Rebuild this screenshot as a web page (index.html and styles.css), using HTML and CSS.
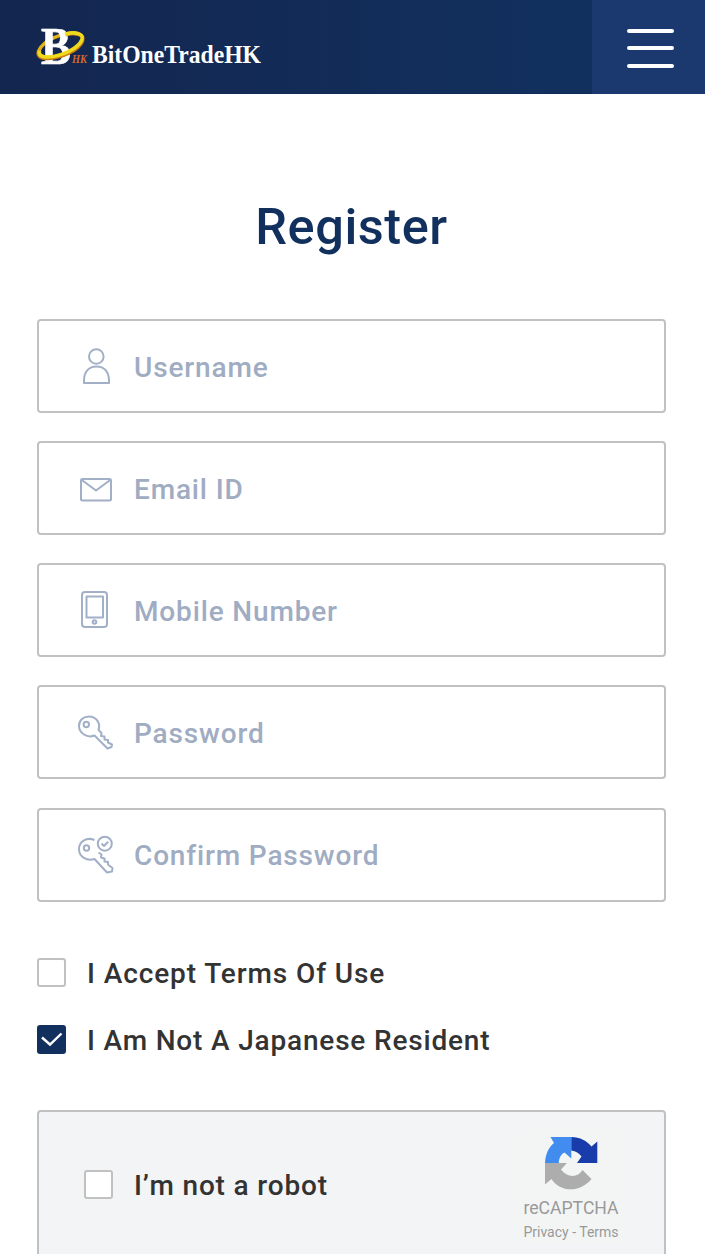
FILE: index.html
```
<!DOCTYPE html>
<html lang="en">
<head>
<meta charset="utf-8">
<title>Register</title>
<link rel="stylesheet" href="styles.css">
</head>
<body>
<header class="bar">
  <a class="brand" aria-label="BitOneTradeHK">
    <svg width="260" height="90" viewBox="20 0 260 90">
      <path d="M80 35C71 30 49 37 41 47C36 54 41 58 52 57" fill="none" stroke="#e0b31a" stroke-width="3.600"/>
      <text class="logo-b" x="41" y="63.500" textLength="30" lengthAdjust="spacingAndGlyphs">B</text>
      <path d="M66 34.800C77 31.500 84.500 34.500 82.500 41C79 50 62 58 48 58.500C40 58.500 36.500 55.500 39 50" fill="none" stroke="#c97b16" stroke-width="3.600"/>
      <path d="M65 34.200C76 31 84 34 82 39.500C78.500 48.500 62 56.500 48 57C41 57 38 55 39.500 50.500" fill="none" stroke="#f0da1c" stroke-width="3.600"/>
      <text class="logo-hk" x="72" y="63" textLength="15" lengthAdjust="spacingAndGlyphs">HK</text>
      <text class="logo-name" x="92" y="62.500" textLength="169" lengthAdjust="spacingAndGlyphs">BitOneTradeHK</text>
    </svg>
  </a>
  <button class="menu" aria-label="Menu"><span class="line"></span><span class="line"></span><span class="line"></span></button>
</header>
<main class="page">
  <h1 class="title">Register</h1>
  <form class="fields">
    <div class="field">
      <svg class="icon" width="40" height="44" viewBox="76 344 40 44"><circle cx="96.300" cy="356.500" r="7.300"/><path d="M84 383V380.500C84 371.500 89 366.500 96.500 366.500S109 371.500 109 380.500V383Z"/></svg>
      <span class="label user">Username</span>
    </div>
    <div class="field">
      <svg class="icon" width="40" height="44" viewBox="76 466 40 44"><rect x="81" y="479" width="30" height="21.500" rx="1.500"/><path d="M81.500 479.800L96 490.500L110.500 479.800"/></svg>
      <span class="label email">Email ID</span>
    </div>
    <div class="field">
      <svg class="icon" width="40" height="44" viewBox="76 588 40 44"><rect x="82" y="592" width="25" height="35" rx="3"/><rect x="86.500" y="596.500" width="16.500" height="21"/><circle cx="94.500" cy="622" r="1.800"/></svg>
      <span class="label mobile">Mobile Number</span>
    </div>
    <div class="field">
      <svg class="icon" width="40" height="44" viewBox="76 710 40 44"><circle cx="86.300" cy="724.500" r="2.700"/><path d="M94.500 735.500C87 738.500 79 733 79 726C79 720 83.500 716.500 89 716.500C96 716.500 101 723 98.500 730L101.500 733L101 736L104.500 736.500L104.500 739.500L108 740L108 742.500L112 744.500L111.500 747L107.500 748.500Z"/></svg>
      <span class="label pass">Password</span>
    </div>
    <div class="field">
      <svg class="icon" width="40" height="44" viewBox="76 833 40 44"><circle cx="86.500" cy="848" r="2.700"/><path d="M94.500 840.200C87 836.500 79 841.500 79 849C79 857 87 861.500 94.500 859L107 872.500L112 871.500L112.500 868L108 864.500V862L104.500 861.500V858.500L101 857.500L101.500 854.500L98.500 852.500"/><circle cx="104.800" cy="843.700" r="7"/><path d="M101.500 843.500L104 846L108.200 841.800"/></svg>
      <span class="label confirm">Confirm Password</span>
    </div>
  </form>
  <div class="choices">
    <div class="choice"><span class="box"></span><span class="text terms">I Accept Terms Of Use</span></div>
    <div class="choice"><span class="box checked"><svg width="29" height="29" viewBox="0 0 29 29"><path d="M5 12.500L13 19.500L24.500 8.500" fill="none" stroke="#fff" stroke-width="2.400"/></svg></span><span class="text resident">I Am Not A Japanese Resident</span></div>
  </div>
  <section class="captcha">
    <span class="box"></span><span class="text robot">I’m not a robot</span>
    <div class="badge">
      <svg class="arrows" width="56" height="56" viewBox="543 1135 56 56">
        <path d="M545 1163C545.500 1154 548.500 1147.500 554 1143L550.500 1137H571.300V1158.500L564.500 1152.500C561 1154 559 1158 558.800 1163Z" fill="#438cef"/>
        <path d="M571.300 1137C580 1137 587 1141 591.500 1146.500L597.300 1141.500V1163H577L581.500 1156.500C579 1153 576 1151 571.300 1150.500Z" fill="#193cab"/>
        <path d="M545 1163H567L561 1169.500C567 1178 578 1178 582.500 1170L591.500 1179C580 1193 560 1192.500 551.500 1179L545 1184.500Z" fill="#adadad"/>
      </svg>
      <span class="rc">reCAPTCHA</span>
      <span class="links">Privacy - Terms</span>
    </div>
  </section>
</main>
</body>
</html>
```
FILE: styles.css
```
* { box-sizing: border-box; }
html, body { height: 1254px; overflow: hidden; }
body { margin: 0; background: #fff; font-family: Roboto, sans-serif; }
.bar { height: 94px; display: flex; justify-content: space-between; background: linear-gradient(90deg, #13264f, #12305e 80%); border-bottom: 1px solid #102a58; }
.brand { padding-left: 20px; }
.brand svg { display: block; overflow: visible; }
.logo-b { font: bold 52px "Liberation Serif", serif; fill: #fff; stroke: #fff; stroke-width: .6px; }
.logo-hk { font: italic bold 12px "Liberation Serif", serif; fill: #d4682c; }
.logo-name { font: bold 25px "Liberation Serif", serif; fill: #fff; }
.menu { width: 113px; height: 94px; padding: 29px 31px 26px 35px; border: 0; background: #1b386f; display: flex; flex-direction: column; justify-content: space-between; }
.line { display: block; width: 47px; height: 4px; border-radius: 2px; background: #fff; }
.line:nth-child(2) { margin-top: -1px; }
.page { padding: 103px 39px 0 37px; }
.title { margin: 0; height: 60px; text-align: center; font-size: 50.500px; line-height: 60px; font-weight: 500; letter-spacing: .55px; color: #12305e; }
.fields { margin-top: 62px; display: grid; gap: 28.150px; }
.field { height: 94px; border: 2px solid #c1c1c1; border-radius: 4px; display: flex; align-items: center; padding-left: 37px; }
.icon { display: block; fill: none; stroke: #a2b0c7; stroke-width: 2; stroke-linejoin: round; }
.label, .text { white-space: nowrap; font-size: 28px; line-height: 34px; font-weight: 500; letter-spacing: .85px; }
.label { margin-left: 18px; padding-top: 3px; color: #a0acc2; }
.user, .email, .mobile { padding-top: 4px; }
.confirm { padding-top: 2px; }
.choices { margin-top: 54.400px; display: grid; gap: 33px; }
.choice { height: 34px; display: flex; align-items: center; gap: 21px; }
.text { color: #333; }
.choice .text { padding-top: 3px; }
.terms { letter-spacing: .9px; }
.resident { letter-spacing: .82px; }
.box { width: 29px; height: 29px; flex: none; border: 2px solid #c1c1c1; border-radius: 3px; background: #fff; }
.checked { border: 0; background: #12305e; }
.checked svg { display: block; }
.captcha { margin-top: 53px; height: 180px; border: 2px solid #bfc2c1; border-radius: 4px; background: #f3f4f6; display: flex; align-items: flex-start; padding-left: 45px; }
.captcha .box { margin-top: 58.500px; }
.robot { margin: 57px 0 0 21px; }
.badge { width: 110px; margin: 18px 38px 0 auto; height: 114px; padding-top: 5px; background: #f3f5f5; display: flex; flex-direction: column; align-items: center; color: #999; white-space: nowrap; }
.arrows { display: block; }
.rc { margin-top: 7px; font-size: 17.600px; line-height: 20px; }
.links { margin-top: 5px; font-size: 14px; line-height: 18px; }
```
